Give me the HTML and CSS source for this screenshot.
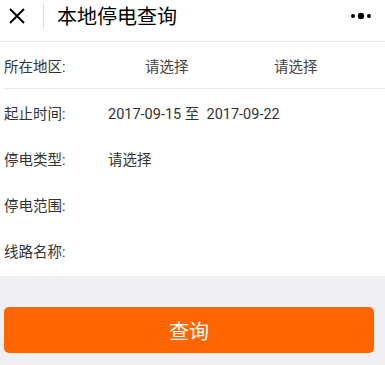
FILE: index.html
```html
<!DOCTYPE html>
<html lang="zh-CN">
<head>
    <meta charset="UTF-8">
    <meta name="viewport" content="width=device-width, initial-scale=1.0">
    <title>本地停电查询</title>
    <link rel="stylesheet" href="styles.css">
</head>
<body>

    <div class="topbar">
        <span class="close">
            <svg width="16" height="16" viewBox="0 0 16 16"><path d="M1 1L15 15M15 1L1 15" stroke="#000" stroke-width="2" fill="none"/></svg>
        </span>
        <span class="sep"></span>
        <h1>本地停电查询</h1>
        <span class="more">
            <svg width="22" height="8" viewBox="0 0 22 8"><circle cx="3" cy="4" r="2" fill="#000"/><circle cx="11" cy="4" r="3.2" fill="#000"/><circle cx="19" cy="4" r="2" fill="#000"/></svg>
        </span>
    </div>

    <div class="form">
        <div class="row line">
            <span class="label">所在地区:</span>
            <span class="pick first">请选择</span>
            <span class="pick">请选择</span>
        </div>
        <div class="row">
            <span class="label">起止时间:</span>
            <span class="value">2017-09-15 至&nbsp; 2017-09-22</span>
        </div>
        <div class="row">
            <span class="label">停电类型:</span>
            <span class="value">请选择</span>
        </div>
        <div class="row">
            <span class="label">停电范围:</span>
        </div>
        <div class="row">
            <span class="label">线路名称:</span>
        </div>
    </div>

    <div class="actions">
        <button class="query">查询</button>
    </div>

</body>
</html>
```

FILE: styles.css
```css
body {
    margin: 0;
    font-family: Roboto, "Noto Sans CJK SC", sans-serif;
    background-color: #efeff4;
    color: #333;
}
.topbar {
    display: flex;
    align-items: center;
    height: 42px;
    padding-bottom: 10px;
    box-sizing: border-box;
    background-color: #fff;
    border-bottom: 1px solid #e8e8e8;
}
.close {
    display: flex;
    margin-left: 9px;
}
.sep {
    width: 1px;
    height: 26px;
    margin-left: 18px;
    background-color: #ddd;
}
h1 {
    margin: 0 0 0 13px;
    font-size: 20px;
    font-weight: normal;
    color: #000;
    flex: 1;
}
.more {
    display: flex;
    margin-right: 13px;
}
.form {
    background-color: #fff;
    padding-left: 4px;
    padding-bottom: 3px;
}
.row {
    display: flex;
    align-items: center;
    height: 46px;
    font-size: 14.5px;
}
.line {
    border-bottom: 1px solid #e8e8e8;
}
.label {
    width: 104px;
    flex-shrink: 0;
}
.pick {
    color: #444;
}
.pick.first {
    width: 129px;
    margin-left: 37px;
}
.actions {
    padding: 31px 11px 0 4px;
}
.query {
    width: 100%;
    height: 46px;
    border: none;
    border-radius: 5px;
    background-color: #ff6600;
    color: #fff;
    font-family: "Noto Sans CJK SC", sans-serif;
    font-size: 20px;
    cursor: pointer;
}
```
